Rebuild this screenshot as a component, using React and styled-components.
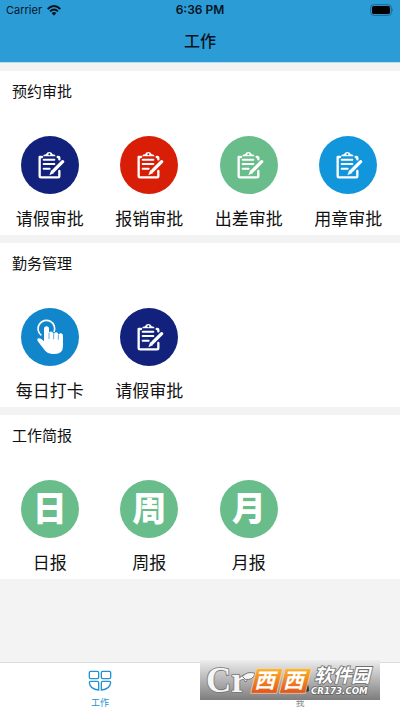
import React from 'react'
import styled, { createGlobalStyle } from 'styled-components'

const GlobalStyle = createGlobalStyle`
    * {
        box-sizing: border-box;
    }
    body {
        margin: 0;
        background-color: #f3f3f3;
        color: #111;
        font-family: "Inter", "Noto Sans CJK SC", sans-serif;
    }
    button {
        border: none;
        background: none;
        padding: 0;
        font-family: inherit;
        color: inherit;
        cursor: pointer;
    }
`

const Container = styled.div`
    min-height: 100vh;
    display: flex;
    flex-direction: column;
`

const Header = styled.header`
    background-color: #2c9cd7;
    border-bottom: 1px solid #b5dbf0;
    color: #06141f;
`

const StatusBar = styled.div`
    height: 20px;
    padding: 0 6px;
    display: grid;
    grid-template-columns: 1fr auto 1fr;
    align-items: center;
    font-size: 11px;
    line-height: 20px;
`

const Carrier = styled.span`
    display: flex;
    align-items: center;
    gap: 5px;
`

const Time = styled.span`
    font-size: 12px;
    font-weight: 600;
`

const Battery = styled.svg`
    justify-self: end;
`

const Title = styled.h1`
    margin: 0;
    font-size: 16px;
    font-weight: 500;
    line-height: 42px;
    text-align: center;
`

const Main = styled.main`
    flex: 1;
    padding-top: 8px;
    display: flex;
    flex-direction: column;
    gap: 8px;
`

const Section = styled.section`
    background-color: white;
    padding-bottom: 4px;
`

const SectionTitle = styled.h2`
    margin: 0;
    padding: 0 12px;
    font-size: 15px;
    font-weight: 400;
    line-height: 42px;
`

const Grid = styled.div`
    padding: 23px 2px 0 0;
    display: grid;
    grid-template-columns: repeat(4, 1fr);
`

const Item = styled.button`
    display: flex;
    flex-direction: column;
    align-items: center;
    gap: 13px;
    font-size: 17px;
    line-height: 24px;
`

const Circle = styled.span`
    width: 58px;
    height: 58px;
    border-radius: 50%;
    background-color: ${props => props.$color};
    color: white;
    display: flex;
    align-items: center;
    justify-content: center;
    font-size: 34px;
    font-weight: 900;
    line-height: 60px;
`

const TabBar = styled.nav`
    position: relative;
    height: 48px;
    display: flex;
    background-color: white;
    border-top: 1px solid #dcdcdc;
`

const Tab = styled.button`
    flex: 1;
    padding-top: 7px;
    display: flex;
    flex-direction: column;
    align-items: center;
    gap: 5px;
    font-size: 9px;
    line-height: 14px;
    color: ${props => props.$active ? '#2492d2' : '#8a8a8a'};
`

// sits over the tab bar
const Watermark = styled.svg`
    position: absolute;
    right: 20px;
    bottom: 10px;
`

const WifiIcon = () => (
    <svg width="14" height="11" viewBox="0 0 42 33" fill="none" stroke="currentColor" strokeWidth="5.5">
        <path d="M2 12 Q21 -6 40 12" />
        <path d="M9 19 Q21 8 33 19" />
        <path d="M14 24 Q21 18 28 24 L21 32 Z" fill="currentColor" stroke="none" />
    </svg>
)

const BatteryIcon = () => (
    <Battery width="24" height="12" viewBox="0 0 72 36">
        <rect x="2" y="2" width="62" height="32" rx="9" fill="none" stroke="#1d6690" strokeWidth="3" />
        <rect x="6" y="6" width="54" height="24" rx="5" fill="#000" />
        <path d="M67 13 Q72 18 67 23 Z" fill="#1d6690" />
    </Battery>
)

const ClipboardIcon = () => (
    <svg width="58" height="58" viewBox="18 17 174 174" fill="none" stroke="white" strokeWidth="7" strokeLinecap="round" strokeLinejoin="round">
        <path d="M81 80 H74 V137 Q74 141 78 141 H129 Q133 141 133 137 V122" />
        <path d="M128 80 H130 Q133 80 133 83 V87" />
        <path d="M84 78 Q85 72 93 72 Q96 65 103 65 Q110 65 113 72 Q121 72 122 78 Z M103 69 A3 3 0 1 0 103 75 A3 3 0 1 0 103 69 Z" fill="white" fillRule="evenodd" stroke="none" />
        <path d="M86 88 H118 M86 101 H118 M86 115 H104" strokeWidth="6" />
        <path d="M143 94 L116 121" strokeWidth="10" />
        <path d="M109 119 L118 128 L103 135 Z" fill="white" stroke="none" />
    </svg>
)

const TouchIcon = () => (
    <svg width="58" height="58" viewBox="63 218 174 174" fill="none">
        <path d="M124 300 A25 25 0 1 1 162 290" stroke="white" strokeWidth="5" />
        <path d="M132 323 V281 Q132 273 140 273 Q147 273 147 281 V292 Q150 288 155 289 Q160 290 161 296 Q164 290 170 291 Q174 292 175 298 Q178 292 184 294 Q189 296 189 302 V332 Q189 356 164 356 H156 Q144 356 136 347 Q125 333 113 317 Q110 310 116 309 Q123 308 132 318 Z" fill="white" />
        <path d="M147 293 V311 M161 296 V312 M175 299 V313" stroke="#1186cb" strokeWidth="2" />
    </svg>
)

const WorkIcon = () => (
    <svg width="24" height="21" viewBox="0 0 72 63" fill="none" stroke="currentColor" strokeWidth="4">
        <rect x="4" y="4" width="28" height="22" rx="4" />
        <rect x="40" y="4" width="28" height="22" rx="4" />
        <path d="M8 34 H28 Q32 34 32 38 V60 Q6 58 4 38 Q4 34 8 34 Z" />
        <path d="M64 34 H44 Q40 34 40 38 V60 Q66 58 68 38 Q68 34 64 34 Z" />
    </svg>
)

const MeIcon = () => (
    <svg width="24" height="21" viewBox="0 0 24 21" fill="none" stroke="#444" strokeWidth="2">
        <circle cx="12" cy="6" r="4" />
        <path d="M4 20 Q4 12 12 12 Q20 12 20 20 Z" />
    </svg>
)

const SiteMark = () => (
    <Watermark width="180" height="40" viewBox="30 30 540 120" role="img" aria-label="西西软件园">
        <defs>
            <linearGradient id="plate" x1="0" y1="0" x2="0" y2="1">
                <stop offset="0" stopColor="#ededed" />
                <stop offset="1" stopColor="#7d7d7d" />
            </linearGradient>
            <linearGradient id="orange" x1="0" y1="0" x2="0" y2="1">
                <stop offset="0" stopColor="#fbb42c" />
                <stop offset="1" stopColor="#e2531c" />
            </linearGradient>
        </defs>
        <rect x="30" y="30" width="540" height="120" fill="url(#plate)" />
        <text x="48" y="126" fontFamily="Liberation Serif, serif" fontWeight="700" fontSize="105" fill="#f5f5f5" stroke="#777" strokeWidth="5" paintOrder="stroke">Cr</text>
        <path d="M158 80 Q170 62 196 70 Q188 92 166 88 Z" fill="#f5f5f5" stroke="#777" strokeWidth="3" />
        <path d="M340 126 L350 98 Q357 106 357 122 Q355 127 340 126 Z" fill="#333" />
        <path d="M200 56 H278 L260 130 H182 Z M286 56 H364 L346 130 H268 Z" fill="url(#orange)" stroke="#f5ddc0" strokeWidth="2" />
        <g fontFamily="Noto Sans CJK SC, sans-serif" fontStyle="italic" fontWeight="700" fill="white">
            <text x="193" y="114" fontSize="62">西</text>
            <text x="279" y="114" fontSize="62">西</text>
            <text x="372" y="95" fontSize="56" stroke="#707070" strokeWidth="5" paintOrder="stroke">软件园</text>
        </g>
        <text x="363" y="133" fontFamily="DejaVu Sans, sans-serif" fontStyle="italic" fontWeight="700" fontSize="26" fill="white" stroke="#606060" strokeWidth="4" paintOrder="stroke">CR173.COM</text>
    </Watermark>
)

const sections = [
    {
        title: '预约审批',
        items: [
            { label: '请假审批', color: '#12217b', icon: <ClipboardIcon /> },
            { label: '报销审批', color: '#d81e06', icon: <ClipboardIcon /> },
            { label: '出差审批', color: '#69bd8b', icon: <ClipboardIcon /> },
            { label: '用章审批', color: '#1296db', icon: <ClipboardIcon /> },
        ],
    },
    {
        title: '勤务管理',
        items: [
            { label: '每日打卡', color: '#1186cb', icon: <TouchIcon /> },
            { label: '请假审批', color: '#12217b', icon: <ClipboardIcon /> },
        ],
    },
    {
        title: '工作简报',
        items: [
            { label: '日报', color: '#69bd8b', icon: '日' },
            { label: '周报', color: '#69bd8b', icon: '周' },
            { label: '月报', color: '#69bd8b', icon: '月' },
        ],
    },
]

const App = () => {
    return (
        <Container lang="zh-CN">
            <GlobalStyle />
            <Header>
                <StatusBar>
                    <Carrier>Carrier <WifiIcon /></Carrier>
                    <Time>6:36 PM</Time>
                    <BatteryIcon />
                </StatusBar>
                <Title>工作</Title>
            </Header>
            <Main>
                {sections.map(section => (
                    <Section key={section.title}>
                        <SectionTitle>{section.title}</SectionTitle>
                        <Grid>
                            {section.items.map(item => (
                                <Item key={item.label}>
                                    <Circle $color={item.color} aria-hidden="true">{item.icon}</Circle>
                                    {item.label}
                                </Item>
                            ))}
                        </Grid>
                    </Section>
                ))}
            </Main>
            <TabBar>
                <Tab $active><WorkIcon />工作</Tab>
                <Tab><MeIcon />我</Tab>
                <SiteMark />
            </TabBar>
        </Container>
    )
}

export default App
